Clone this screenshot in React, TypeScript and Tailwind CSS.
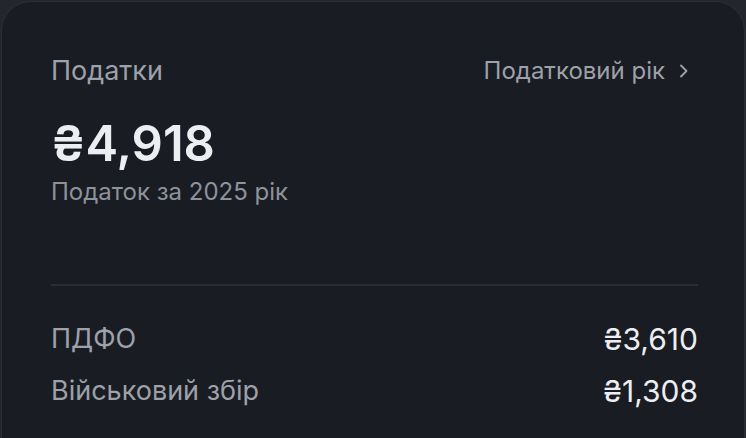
import React from "react";

const rows = [
  { label: "ПДФО", amount: "₴3,610" },
  { label: "Військовий збір", amount: "₴1,308" },
];

const Chevron = () => (
  <svg width="12" height="16" viewBox="0 0 12 16" fill="none">
    <path
      d="M3 2.5 8.5 8 3 13.5"
      stroke="currentColor"
      strokeWidth="1.8"
      strokeLinecap="round"
      strokeLinejoin="round"
    />
  </svg>
);

const TaxCard = () => {
  return (
    <div className="ml-[1px] mt-[1px] w-[744px] h-[480px] rounded-[30px] border border-[#2c2f36] bg-[#191c23] pl-[49px] pr-[46px] pt-[54px] font-['Inter',sans-serif]">
      <div className="flex items-center justify-between h-[30px]">
        <span className="text-[27px] leading-[30px] text-[#9da1a9]">
          Податки
        </span>
        <button className="flex items-center gap-[13px] pr-[8px] text-[24px] leading-[30px] text-[#9da1a9]">
          Податковий рік
          <Chevron />
        </button>
      </div>

      <div className="mt-[34px] text-[49px] leading-[48px] font-semibold text-[#eceef1]">
        ₴4,918
      </div>
      <div className="mt-[10px] text-[24px] leading-[28px] text-[#8e929a]">
        Податок за 2025 рік
      </div>

      <div className="mt-[78px] h-[2px] bg-[#2a2d34]" />

      <div className="mt-[37px] flex flex-col gap-[20px]">
        {rows.map((row) => (
          <div key={row.label} className="flex items-center justify-between h-[32px]">
            <span className="text-[27px] leading-[32px] text-[#9da1a9]">
              {row.label}
            </span>
            <span className="text-[30px] leading-[32px] text-[#eceef1]">
              {row.amount}
            </span>
          </div>
        ))}
      </div>
    </div>
  );
};

export default function App() {
  return (
    <div className="w-[746px] h-[438px] overflow-hidden bg-[#23262c]">
      <TaxCard />
    </div>
  );
}
